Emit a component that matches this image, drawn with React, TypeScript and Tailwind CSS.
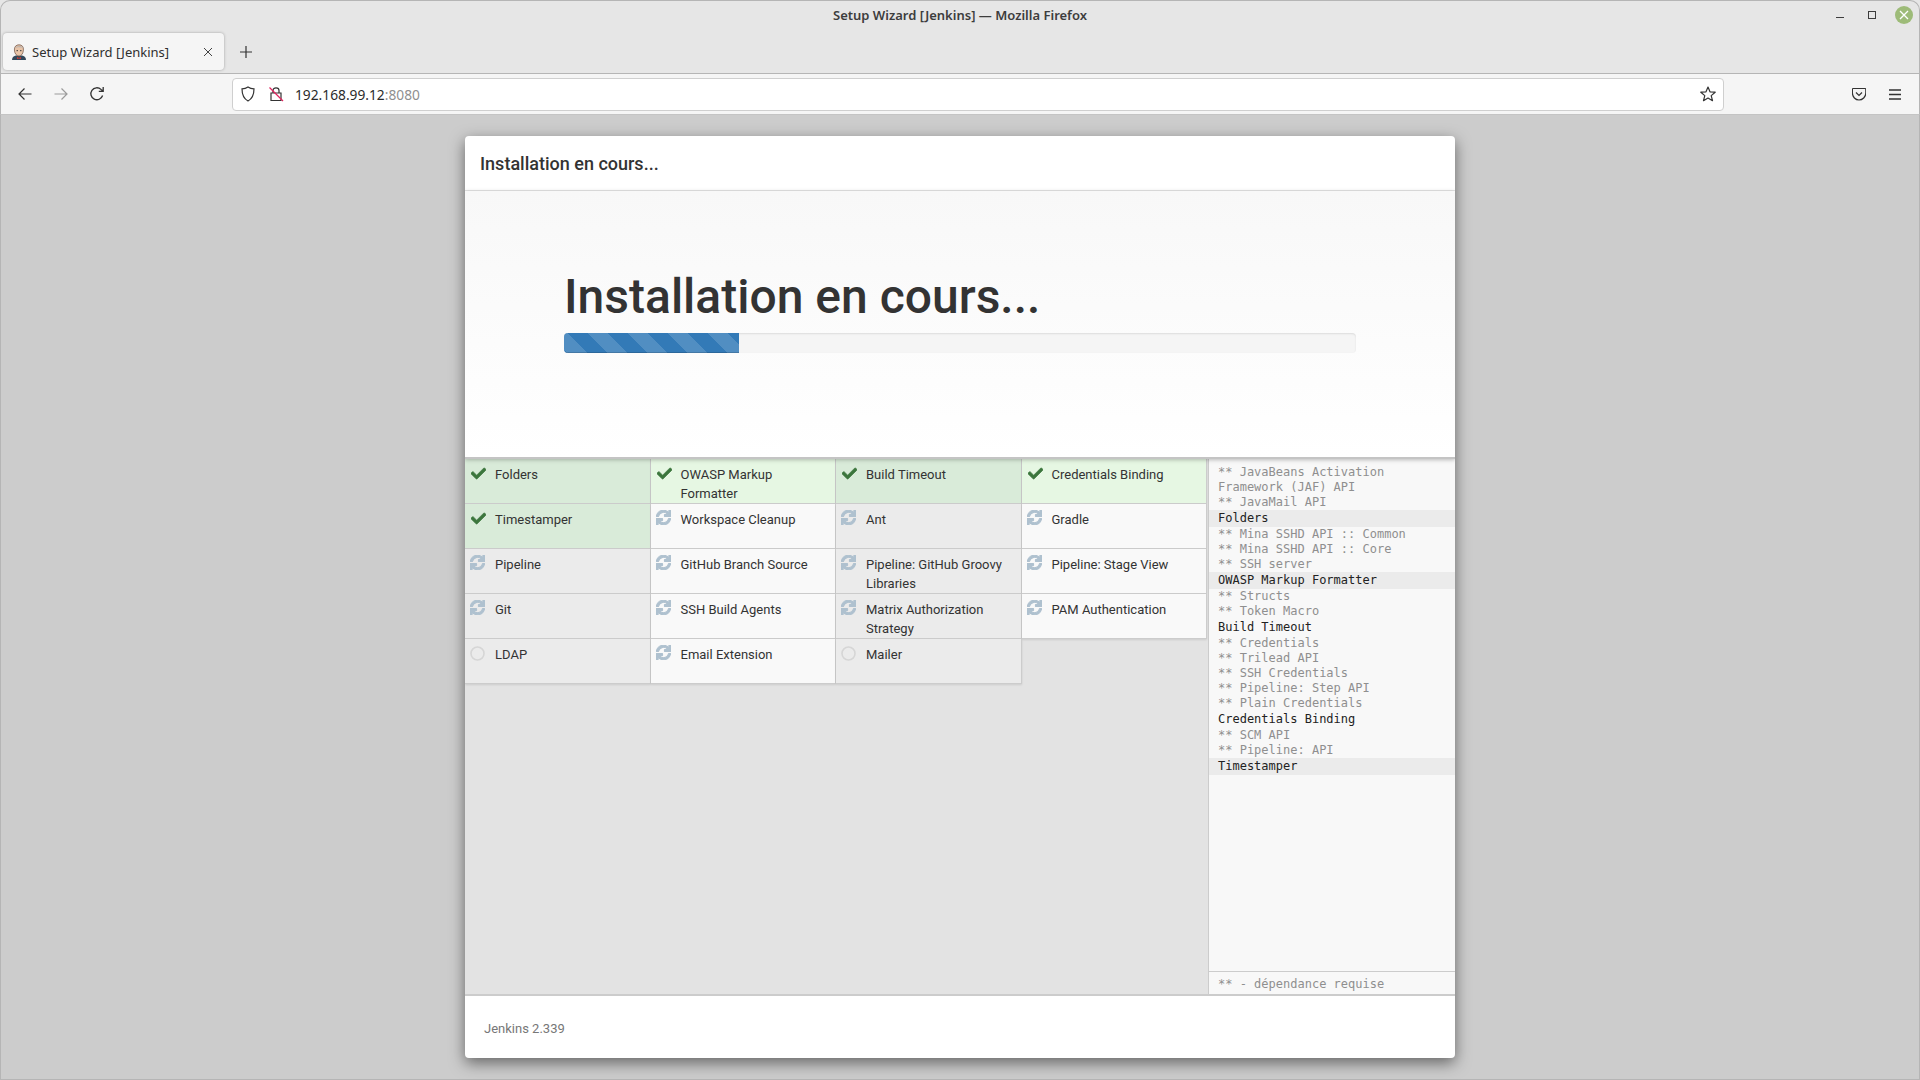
import React from "react";
import { FaCheck, FaSync } from "react-icons/fa";

const uiFont = "font-['Noto_Sans','Open_Sans',sans-serif]";

type St = "done" | "busy" | "wait";
const plugins: { n: string; s: St }[] = [
  { n: "Folders", s: "done" },
  { n: "OWASP Markup Formatter", s: "done" },
  { n: "Build Timeout", s: "done" },
  { n: "Credentials Binding", s: "done" },
  { n: "Timestamper", s: "done" },
  { n: "Workspace Cleanup", s: "busy" },
  { n: "Ant", s: "busy" },
  { n: "Gradle", s: "busy" },
  { n: "Pipeline", s: "busy" },
  { n: "GitHub Branch Source", s: "busy" },
  { n: "Pipeline: GitHub Groovy Libraries", s: "busy" },
  { n: "Pipeline: Stage View", s: "busy" },
  { n: "Git", s: "busy" },
  { n: "SSH Build Agents", s: "busy" },
  { n: "Matrix Authorization Strategy", s: "busy" },
  { n: "PAM Authentication", s: "busy" },
  { n: "LDAP", s: "wait" },
  { n: "Email Extension", s: "busy" },
  { n: "Mailer", s: "wait" },
];

const log: { t: string; d?: boolean; h?: boolean }[] = [
  { t: "** JavaBeans Activation Framework (JAF) API", d: true },
  { t: "** JavaMail API", d: true },
  { t: "Folders", h: true },
  { t: "** Mina SSHD API :: Common", d: true },
  { t: "** Mina SSHD API :: Core", d: true },
  { t: "** SSH server", d: true },
  { t: "OWASP Markup Formatter", h: true },
  { t: "** Structs", d: true },
  { t: "** Token Macro", d: true },
  { t: "Build Timeout" },
  { t: "** Credentials", d: true },
  { t: "** Trilead API", d: true },
  { t: "** SSH Credentials", d: true },
  { t: "** Pipeline: Step API", d: true },
  { t: "** Plain Credentials", d: true },
  { t: "Credentials Binding" },
  { t: "** SCM API", d: true },
  { t: "** Pipeline: API", d: true },
  { t: "Timestamper", h: true },
];

function Icon({ s }: { s: St }) {
  if (s === "done")
    return (
      <div className="pl-[6px] pt-[7px]">
        <FaCheck size={15} color="#3c763d" stroke="#3c763d" strokeWidth={24} className="block" />
      </div>
    );
  if (s === "wait")
    return (
      <div className="pl-[5px] pt-[7px]">
        <svg width="15" height="15" viewBox="0 0 15 15" className="block">
          <circle cx="7.5" cy="7.5" r="6.5" fill="none" stroke="#d6d6d6" strokeWidth="1.6" />
        </svg>
      </div>
    );
  return (
    <div className="pl-[5px] pt-[6px]">
      <FaSync size={15} color="#afc1cf" stroke="#afc1cf" strokeWidth={36} className="block" />
    </div>
  );
}

function Jenkins() {
  return (
    <svg width="16" height="16" viewBox="0 0 16 16" className="block shrink-0">
      <path d="M1 16 C1 13 3 12 5 11.5 L11 11.5 C13 12 15 13 15 16 Z" fill="#33475a" />
      <path d="M3.4 6 C3.2 2.6 5.2 0.8 8 0.8 C11 0.8 12.8 2.8 12.4 6 C12.2 9.5 10.6 12 8 12 C5.4 12 3.6 9.5 3.4 6 Z" fill="#e8c4a8" stroke="#6b5044" strokeWidth="0.7" />
      <path d="M4 4 C5 1.5 11 1.2 12.2 4 C10 3 6 3 4 4 Z" fill="#bcb3ad" />
      <path d="M6 13 L8 14 L10 13 L10 15 L8 14.4 L6 15 Z" fill="#d33833" />
      <rect x="5.6" y="6" width="1.2" height="1.2" fill="#333" />
      <rect x="9.2" y="6" width="1.2" height="1.2" fill="#333" />
    </svg>
  );
}

function Chrome() {
  return (
    <div className={`${uiFont} shrink-0 bg-[#e6e6e6] text-[#2f2f2f]`}>
      <div className="relative flex h-[33px] items-center justify-center rounded-t-[10px] border-x border-t border-[#b5b5b5] pb-[3px] text-[13px] font-semibold leading-none text-[#3d3d3d]">
        Setup Wizard [Jenkins] — Mozilla Firefox
        <div className="absolute right-[6px] top-[5px] flex items-center">
          <div className="mt-[4px] h-px w-[8px] bg-[#3d3d3d]" />
          <div className="ml-[24px] h-[8px] w-[8px] border border-[#3d3d3d]" />
          <div className="ml-[19px] flex h-[18px] w-[18px] items-center justify-center rounded-full bg-[#9dbb78]">
            <svg width="10" height="10" viewBox="0 0 10 10"><path d="M1 1 L9 9 M9 1 L1 9" stroke="#fff" strokeWidth="1.3" /></svg>
          </div>
        </div>
      </div>
      <div className="flex h-[40px] items-start border-x border-[#b5b5b5] pl-[2px]">
        <div className="flex h-[37px] w-[221px] items-center rounded-[4px] bg-[#f5f5f5] pl-[8px] pr-[11px] text-[13px] shadow-[0_0_3px_rgba(0,0,0,0.3)]">
          <Jenkins />
          <span className="ml-[5px] flex-1 pt-[2px] leading-none">Setup Wizard [Jenkins]</span>
          <svg width="10" height="10" viewBox="0 0 10 10"><path d="M1 1 L9 9 M9 1 L1 9" stroke="#444" strokeWidth="1" /></svg>
        </div>
        <svg width="12" height="12" viewBox="0 0 12 12" className="ml-[16px] mt-[13px]"><path d="M6 0 V12 M0 6 H12" stroke="#333" strokeWidth="1.2" /></svg>
      </div>
      <div className="flex h-[42px] items-center border-x border-y border-[#b5b5b5] border-b-[#c4c4c4] bg-[#f5f5f5] pl-[17px]">
        <svg width="14" height="14" viewBox="0 0 14 14" className="shrink-0"><path d="M13.5 7 H1 M6.5 1.5 L1 7 L6.5 12.5" fill="none" stroke="#333" strokeWidth="1.2" /></svg>
        <svg width="14" height="14" viewBox="0 0 14 14" className="ml-[22px] shrink-0"><path d="M0.5 7 H13 M7.5 1.5 L13 7 L7.5 12.5" fill="none" stroke="#9b9b9b" strokeWidth="1.2" /></svg>
        <svg width="16" height="16" viewBox="0 0 16 16" className="ml-[21px] shrink-0"><path d="M13.6 9.5 A6 6 0 1 1 12 3.4 L14 5 M14.2 1 V5.4 H9.8" fill="none" stroke="#333" strokeWidth="1.3" /></svg>
        <div className="ml-[127px] flex h-[33px] w-[1492px] shrink-0 items-center rounded-[4px] border border-[#cfcfcf] bg-white pl-[8px] pr-[7px]">
          <svg width="14" height="16" viewBox="0 0 14 16"><path d="M7 1 C9 2.4 11 2.8 13 2.8 C13 8 12 12.4 7 15 C2 12.4 1 8 1 2.8 C3 2.8 5 2.4 7 1 Z" fill="none" stroke="#333" strokeWidth="1.2" /></svg>
          <svg width="15" height="16" viewBox="0 0 15 16" className="ml-[14px]">
            <path d="M4 7 V4.5 C4 1 10 1 10 4.5 V7 M2 7 H12 V14.5 H2 Z" fill="none" stroke="#333" strokeWidth="1.2" />
            <path d="M0.5 1.5 L14 15" stroke="#e0245e" strokeWidth="1.3" />
          </svg>
          <span className="ml-[11px] flex-1 pt-[1px] text-[13.75px] leading-none text-[#2b2b2b]">
            192.168.99.12<span className="text-[#8f8f8f]">:8080</span>
          </span>
          <svg width="16" height="16" viewBox="0 0 16 16"><path d="M8 1 L10 5.8 L15.2 6.2 L11.2 9.6 L12.5 14.7 L8 12 L3.5 14.7 L4.8 9.6 L0.8 6.2 L6 5.8 Z" fill="none" stroke="#333" strokeWidth="1.2" strokeLinejoin="round" /></svg>
        </div>
        <svg width="14" height="14" viewBox="0 0 14 14" className="ml-[128px] shrink-0"><path d="M1 1.5 H13 C13.6 1.5 13.8 2 13.8 2.5 V6 C13.8 10 10.5 13 7 13 C3.5 13 0.4 10 0.4 6 V2.5 C0.4 2 0.6 1.5 1 1.5 Z M4 5.5 L7 8.5 L10 5.5" fill="none" stroke="#333" strokeWidth="1.2" /></svg>
        <svg width="12" height="11" viewBox="0 0 12 11" className="ml-[23px] shrink-0"><path d="M0 1 H12 M0 5.5 H12 M0 10 H12" stroke="#333" strokeWidth="1.3" /></svg>
      </div>
    </div>
  );
}

export default function App() {
  return (
    <div className="flex h-[1080px] w-[1920px] flex-col overflow-hidden bg-[#cccccc]">
      <Chrome />
      <div className="flex flex-1 justify-center border-x border-b border-[#b5b5b5] pt-[21px] font-['Roboto',sans-serif] text-[#333333]">
        <div className="flex h-[922px] w-[990px] flex-col overflow-hidden rounded-[4px] bg-white shadow-[0_5px_15px_rgba(0,0,0,0.5)]">
          <div className="flex h-[55px] shrink-0 items-center border-b border-[#e5e5e5] pl-[15px] pt-[2px] text-[18px] font-medium leading-none">
            Installation en cours...
          </div>
          <div className="relative z-10 h-[268px] shrink-0 border-b-2 border-b-[#c4c4c4] bg-gradient-to-b from-[#f8f8f8] to-white px-[99px] pt-[79px] shadow-[0_1px_4px_rgba(0,0,0,0.25)]">
            <h1 className="text-[48px] font-medium leading-[53px]">Installation en cours...</h1>
            <div className="mt-[10px] h-[20px] overflow-hidden rounded-[4px] bg-[#f5f5f5] shadow-[inset_0_1px_2px_rgba(0,0,0,0.1)]">
              <div className="h-full w-[22.1%] bg-[#337ab7] bg-[linear-gradient(45deg,transparent_25%,rgba(255,255,255,0.15)_25%,rgba(255,255,255,0.15)_50%,transparent_50%,transparent_75%,rgba(255,255,255,0.15)_75%)] bg-[length:40px_40px] bg-[position:4px_0] shadow-[inset_0_-1px_0_rgba(0,0,0,0.15)]" />
            </div>
          </div>
          <div className="flex min-h-0 flex-1">
            <div className="flex-1 border-r border-[#cccccc] bg-[#e3e3e3]">
              <div className="grid w-[742px] grid-cols-4">
                {plugins.map((p, i) => {
                  const odd = i % 2 === 0;
                  const bg =
                    p.s === "done"
                      ? odd
                        ? "bg-[#d9ebd9]"
                        : "bg-[#e6f7e3]"
                      : odd
                        ? "bg-[#ebebeb]"
                        : "bg-[#f9f9f9]";
                  return (
                    <div
                      key={p.n}
                      className={`flex h-[45px] border-b border-r border-[#cccccc] shadow-[0_1px_2px_rgba(0,0,0,0.1)] ${bg}`}
                    >
                      <div className="w-[30px] shrink-0">
                        <Icon s={p.s} />
                      </div>
                      <div className="pr-[10px] pt-[6px] text-[13px] leading-[19px]">{p.n}</div>
                    </div>
                  );
                })}
              </div>
            </div>
            <div className="flex w-[246px] shrink-0 flex-col bg-[#f8f8f8] font-['DejaVu_Sans_Mono',monospace] text-[12px] leading-[15px]">
              <div className="flex-1 pt-[6px]">
                {log.map((l) => (
                  <div
                    key={l.t}
                    className={`${l.d ? "text-[#8f8f8f]" : "py-px text-[#222]"} ${l.h ? "bg-[#ebebeb]" : ""} pl-[9px] pr-[10px]`}
                  >
                    {l.t}
                  </div>
                ))}
              </div>
              <div className="h-[23px] shrink-0 border-t border-[#cccccc] pl-[9px] pr-[10px] pt-[5px] text-[#8f8f8f]">
                ** - dépendance requise
              </div>
            </div>
          </div>
          <div className="flex h-[64px] shrink-0 items-center border-t-2 border-t-[#cccccc] pl-[19px] pt-[4px] text-[13px] text-[#777777]">
            Jenkins 2.339
          </div>
        </div>
      </div>
    </div>
  );
}
